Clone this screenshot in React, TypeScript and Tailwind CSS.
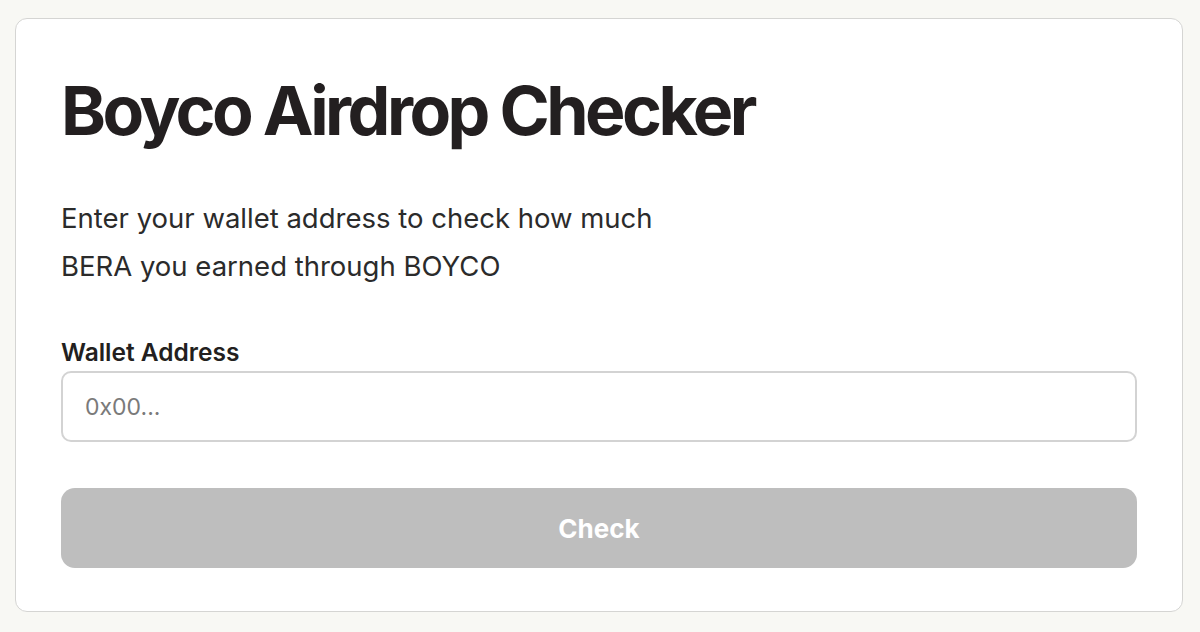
import { useState } from 'react'

export default function App() {
  const [addr, setAddr] = useState('')

  return (
    <div className="min-h-[632px] bg-[#f8f8f4] pl-[15px] pr-[17px] pt-[18px] pb-[20px] font-['Inter',sans-serif]">
      <div className="rounded-[12px] border border-[#d5d5d3] bg-white px-[45px] pt-[51px] pb-[43px]">
        <h1 className="text-[68px] leading-[80px] font-bold tracking-[-0.052em] text-[#231f20]">
          Boyco Airdrop Checker
        </h1>
        <p className="mt-[44px] max-w-[630px] text-[27.5px] leading-[48px] text-[#2b2b2b]">
          Enter your wallet address to check how much BERA you earned through BOYCO
        </p>
        <label className="mt-[47px] block text-[24.5px] leading-[30px] font-semibold text-[#231f20]">Wallet Address</label>
        <input
          value={addr}
          onChange={e => setAddr(e.target.value)}
          placeholder="0x00..."
          className="mt-[4px] block h-[71px] w-full rounded-[10px] border-2 border-[#d3d3d3] px-[22px] text-[23px] text-[#2b2b2b] placeholder:text-[#7a7a7a] outline-none"
        />
        <button className="mt-[46px] flex h-[80px] w-full items-center justify-center rounded-[14px] bg-[#bebebe] text-[26px] font-bold text-white">
          Check
        </button>
      </div>
    </div>
  )
}
